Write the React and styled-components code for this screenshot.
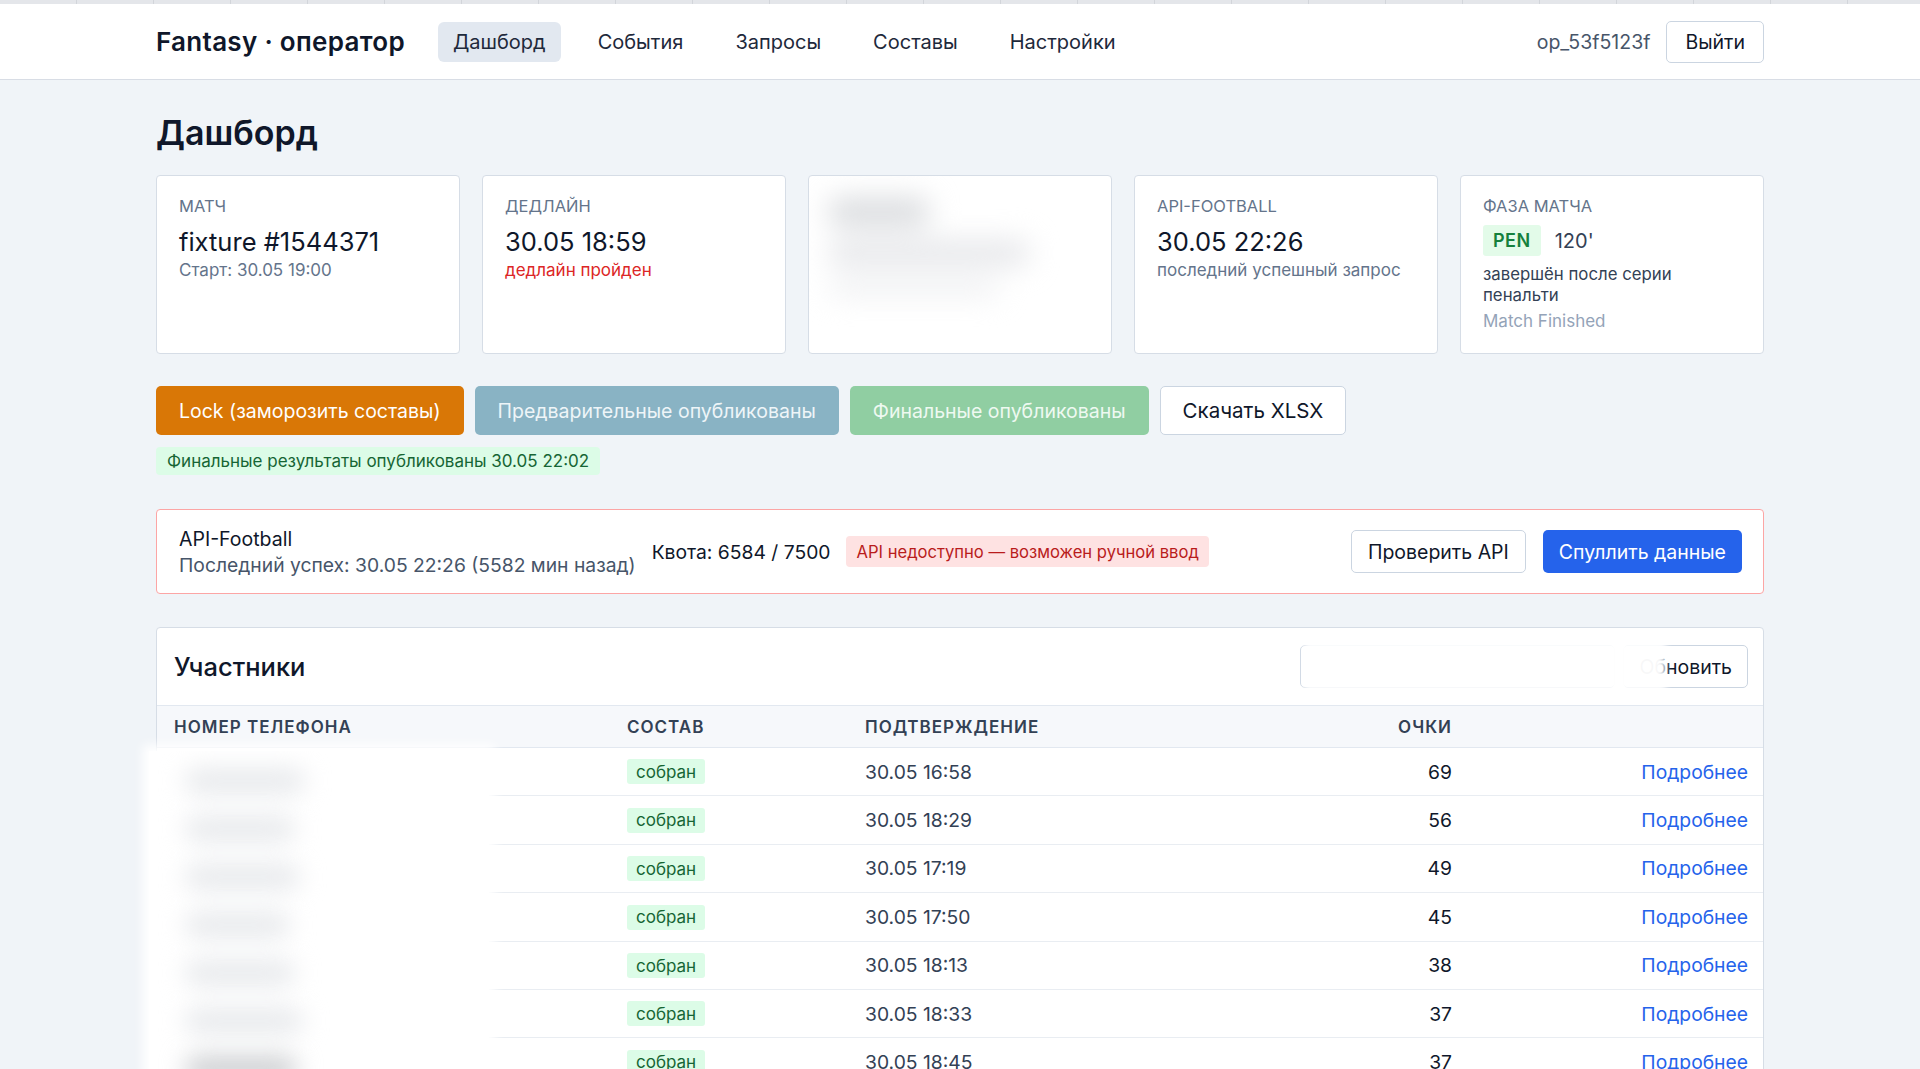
import React from "react";
import styled, { createGlobalStyle } from "styled-components";

const Global = createGlobalStyle`
  html, body { margin: 0; padding: 0; }
  body {
    background: #f0f4f8;
    font-family: Inter, "Noto Sans", sans-serif;
    color: #0f172a;
  }
  * { box-sizing: border-box; }
`;

const TopStrip = styled.div`
  height: 4px;
  background: repeating-linear-gradient(90deg, #e4e6ea 0 76px, #d2d5da 76px 77px);
`;

const Header = styled.header`
  height: 76px;
  background: #fff;
  border-bottom: 1px solid #d8dde5;
`;

const Container = styled.div`
  width: 1608px;
  margin: 0 auto;
`;

const HeaderInner = styled(Container)`
  height: 100%;
  display: flex;
  align-items: center;
`;

const Logo = styled.div`
  font-size: 26px;
  font-weight: 600;
  color: #0f172a;
  margin-right: 33px;
  letter-spacing: 0.3px;
`;

const Nav = styled.nav`
  display: flex;
  align-items: center;
  gap: 22px;
`;

const NavItem = styled.a`
  height: 40px;
  display: flex;
  align-items: center;
  padding: 0 15px;
  border-radius: 6px;
  font-size: 20px;
  color: #1e293b;
  background: ${(p) => (p.$active ? "#e2e8f0" : "transparent")};
`;

const Spacer = styled.div`
  flex: 1;
`;

const User = styled.span`
  font-size: 19.5px;
  color: #475569;
  margin-right: 16px;
`;

const Button = styled.button`
  font-family: inherit;
  height: ${(p) => p.$h || 43}px;
  padding: 0 ${(p) => p.$px || 16}px;
  border-radius: 5px;
  font-size: ${(p) => p.$fs || 19.5}px;
  cursor: pointer;
  white-space: nowrap;
  border: 1px solid ${(p) => p.$border || "transparent"};
  background: ${(p) => p.$bg || "#fff"};
  color: ${(p) => p.$color || "#0f172a"};
`;

const Main = styled(Container)`
  padding-top: 33px;
`;

const Title = styled.h1`
  margin: 0 0 22px;
  font-size: 34px;
  line-height: 40px;
  font-weight: 600;
  color: #0f172a;
`;

const Cards = styled.div`
  display: grid;
  grid-template-columns: repeat(5, 1fr);
  gap: 22px;
`;

const Card = styled.div`
  position: relative;
  height: 179px;
  background: #fff;
  border: 1px solid #d6dde6;
  border-radius: 4px;
  padding: 19px 22px;
  overflow: hidden;
`;

const CardLabel = styled.div`
  font-size: 16.5px;
  line-height: 22px;
  color: #64748b;
  text-transform: uppercase;
  margin-bottom: 8px;
`;

const CardValue = styled.div`
  font-size: 25.5px;
  line-height: 34px;
  color: #0f172a;
`;

const CardSub = styled.div`
  font-size: 17px;
  line-height: 22px;
  color: ${(p) => p.$color || "#64748b"};
  margin-top: ${(p) => p.$mt || 0}px;
`;

const BlurBox = styled.div`
  position: absolute;
  left: 20px;
  top: 22px;
  width: 210px;
  height: 100px;
  filter: blur(14px);
  display: flex;
  flex-direction: column;
  gap: 14px;
`;

const BlurBar = styled.div`
  height: ${(p) => p.$h}px;
  width: ${(p) => p.$w}px;
  background: ${(p) => p.$c || "#d8dadd"};
  border-radius: 10px;
`;

const PhaseRow = styled.div`
  display: flex;
  align-items: center;
  gap: 14px;
  margin-top: 1px;
`;

const PenBadge = styled.span`
  height: 31px;
  padding: 0 10px;
  display: inline-flex;
  align-items: center;
  background: #e3fbe9;
  color: #15803d;
  font-weight: 600;
  font-size: 18px;
  letter-spacing: 0.5px;
  border-radius: 3px;
`;

const Minute = styled.span`
  font-size: 20px;
  color: #334155;
`;

const PhaseText = styled.div`
  font-size: 16.8px;
  line-height: 21px;
  color: #334155;
  max-width: 220px;
  margin-top: 8px;
`;

const Actions = styled.div`
  display: flex;
  gap: 11px;
  margin-top: 32px;
`;

const StatusTag = styled.div`
  display: inline-flex;
  align-items: center;
  height: 28px;
  padding: 0 11px;
  margin-top: 12px;
  background: #dcfce7;
  color: #166534;
  font-size: 17px;
  border-radius: 4px;
`;

const ApiPanel = styled.section`
  margin-top: 34px;
  height: 85px;
  background: #fff;
  border: 1px solid #fca5a5;
  border-radius: 4px;
  padding: 0 21px 0 22px;
  display: flex;
  align-items: center;
`;

const ApiInfo = styled.div`
  display: flex;
  flex-direction: column;
  gap: 2px;
  margin-right: 16px;
`;

const ApiTitle = styled.div`
  font-size: 19.5px;
  line-height: 24px;
  color: #0f172a;
`;

const ApiSub = styled.div`
  font-size: 19.3px;
  line-height: 24px;
  color: #475569;
`;

const Quota = styled.div`
  font-size: 19.3px;
  color: #0f172a;
  margin-right: 16px;
`;

const ErrBadge = styled.div`
  height: 31px;
  display: flex;
  align-items: center;
  padding: 0 10px;
  background: #fee2e2;
  color: #b91c1c;
  font-size: 16.6px;
  border-radius: 4px;
`;

const ApiButtons = styled.div`
  margin-left: auto;
  display: flex;
  gap: 17px;
`;

const Participants = styled.section`
  margin-top: 33px;
  background: #fff;
  border: 1px solid #d6dde6;
  border-radius: 4px;
`;

const PHeader = styled.div`
  height: 77px;
  display: flex;
  align-items: center;
  padding: 0 15px 0 17px;
`;

const PTitle = styled.h2`
  margin: 0;
  font-size: 25.5px;
  font-weight: 500;
  color: #0f172a;
`;

const Tools = styled.div`
  position: relative;
  margin-left: auto;
  display: flex;
  gap: 8px;
`;

const Search = styled.input`
  width: 315px;
  height: 43px;
  border: 1px solid #cbd5e1;
  border-radius: 5px;
  font-family: inherit;
  font-size: 16px;
`;

const ToolsBlur = styled.div`
  position: absolute;
  left: 4px;
  top: -4px;
  width: 362px;
  height: 50px;
  background: rgba(255, 255, 255, 0.97);
  filter: blur(3px);
`;

const Row = styled.div`
  display: grid;
  grid-template-columns: 453px 238px 1fr 120px 296px;
  align-items: center;
  padding: 0 15px 0 17px;
  height: ${(p) => (p.$head ? 43 : 48.4)}px;
  background: ${(p) => (p.$head ? "#f6f8fb" : "#fff")};
  border-top: ${(p) => (p.$head ? "1px solid #e2e8f0" : "none")};
  border-bottom: 1px solid ${(p) => (p.$head ? "#e2e8f0" : "#e9edf2")};
`;

const Th = styled.div`
  font-size: 17px;
  font-weight: 600;
  color: #334155;
  text-transform: uppercase;
  text-align: ${(p) => (p.$right ? "right" : "left")};
  letter-spacing: 1px;
`;

const Td = styled.div`
  font-size: 19.3px;
  color: ${(p) => p.$color || "#334155"};
  text-align: ${(p) => (p.$right ? "right" : "left")};
`;

const Pill = styled.span`
  display: inline-flex;
  align-items: center;
  height: 25px;
  padding: 0 9px;
  background: #dcfce7;
  color: #166534;
  font-size: 17px;
  border-radius: 3px;
`;

const Link = styled.a`
  color: #2563eb;
  font-size: 19.3px;
`;

const Body = styled.div`
  position: relative;
`;

const PhoneBlur = styled.div`
  position: absolute;
  left: -8px;
  top: 3px;
  width: 340px;
  bottom: 0;
  background: #fff;
  box-shadow: 0 0 10px 6px #fff;
  padding: 18px 0 0 36px;
  display: flex;
  flex-direction: column;
  gap: 24px;
  overflow: hidden;
`;

const PhoneSmudge = styled.div`
  width: ${(p) => p.$w}px;
  height: 24px;
  background: ${(p) => p.$c};
  border-radius: 12px;
  filter: blur(12px);
`;

const rows = [
  ["30.05 16:58", 69],
  ["30.05 18:29", 56],
  ["30.05 17:19", 49],
  ["30.05 17:50", 45],
  ["30.05 18:13", 38],
  ["30.05 18:33", 37],
  ["30.05 18:45", 37],
  ["30.05 18:51", 35],
];

export default function App() {
  return (
    <>
      <Global />
      <TopStrip />
      <Header>
        <HeaderInner>
          <Logo>Fantasy · оператор</Logo>
          <Nav>
            <NavItem $active>Дашборд</NavItem>
            <NavItem>События</NavItem>
            <NavItem>Запросы</NavItem>
            <NavItem>Составы</NavItem>
            <NavItem>Настройки</NavItem>
          </Nav>
          <Spacer />
          <User>op_53f5123f</User>
          <Button $border="#cbd5e1" $h={42} $px={18}>
            Выйти
          </Button>
        </HeaderInner>
      </Header>
      <Main>
        <Title>Дашборд</Title>
        <Cards>
          <Card>
            <CardLabel>Матч</CardLabel>
            <CardValue>fixture #1544371</CardValue>
            <CardSub>Старт: 30.05 19:00</CardSub>
          </Card>
          <Card>
            <CardLabel>Дедлайн</CardLabel>
            <CardValue>30.05 18:59</CardValue>
            <CardSub $color="#dc2626">дедлайн пройден</CardSub>
          </Card>
          <Card>
            <BlurBox>
              <BlurBar $w={100} $h={28} $c="#d9dbde" />
              <BlurBar $w={200} $h={26} $c="#e6e7ea" />
              <BlurBar $w={170} $h={16} $c="#eeeff1" />
            </BlurBox>
          </Card>
          <Card>
            <CardLabel>API-Football</CardLabel>
            <CardValue>30.05 22:26</CardValue>
            <CardSub>последний успешный запрос</CardSub>
          </Card>
          <Card>
            <CardLabel>Фаза матча</CardLabel>
            <PhaseRow>
              <PenBadge>PEN</PenBadge>
              <Minute>120'</Minute>
            </PhaseRow>
            <PhaseText>завершён после серии пенальти</PhaseText>
            <CardSub $color="#94a3b8" $mt={4}>
              Match Finished
            </CardSub>
          </Card>
        </Cards>

        <Actions>
          <Button $bg="#d97706" $color="#fff" $h={49} $px={22}>
            Lock (заморозить составы)
          </Button>
          <Button $bg="#89b3c4" $color="#eef5f8" $h={49} $px={22}>
            Предварительные опубликованы
          </Button>
          <Button $bg="#90cea2" $color="#eef9f1" $h={49} $px={22}>
            Финальные опубликованы
          </Button>
          <Button $border="#cbd5e1" $h={49} $px={22} $fs={20.5}>
            Скачать XLSX
          </Button>
        </Actions>
        <StatusTag>Финальные результаты опубликованы 30.05 22:02</StatusTag>

        <ApiPanel>
          <ApiInfo>
            <ApiTitle>API-Football</ApiTitle>
            <ApiSub>Последний успех: 30.05 22:26 (5582 мин назад)</ApiSub>
          </ApiInfo>
          <Quota>Квота: 6584 / 7500</Quota>
          <ErrBadge>API недоступно — возможен ручной ввод</ErrBadge>
          <ApiButtons>
            <Button $border="#cbd5e1" $h={43} $px={16}>
              Проверить API
            </Button>
            <Button $bg="#2563eb" $color="#fff" $h={43} $px={15}>
              Спуллить данные
            </Button>
          </ApiButtons>
        </ApiPanel>

        <Participants>
          <PHeader>
            <PTitle>Участники</PTitle>
            <Tools>
              <Search />
              <Button $border="#cbd5e1" $h={43} $px={15}>
                Обновить
              </Button>
              <ToolsBlur />
            </Tools>
          </PHeader>
          <Row $head>
            <Th>Номер телефона</Th>
            <Th>Состав</Th>
            <Th>Подтверждение</Th>
            <Th $right>Очки</Th>
            <Th />
          </Row>
          <Body>
            {rows.map(([t, pts], i) => (
              <Row key={i}>
                <Td />
                <Td>
                  <Pill>собран</Pill>
                </Td>
                <Td>{t}</Td>
                <Td $right $color="#0f172a">
                  {pts}
                </Td>
                <Td $right>
                  <Link>Подробнее</Link>
                </Td>
              </Row>
            ))}
            <PhoneBlur>
              {[120, 110, 115, 105, 110, 118, 112, 130].map((w, i) => (
                <PhoneSmudge key={i} $w={w} $c={i === 6 ? "#c9cbce" : "#e6e8eb"} />
              ))}
            </PhoneBlur>
          </Body>
        </Participants>
      </Main>
    </>
  );
}
